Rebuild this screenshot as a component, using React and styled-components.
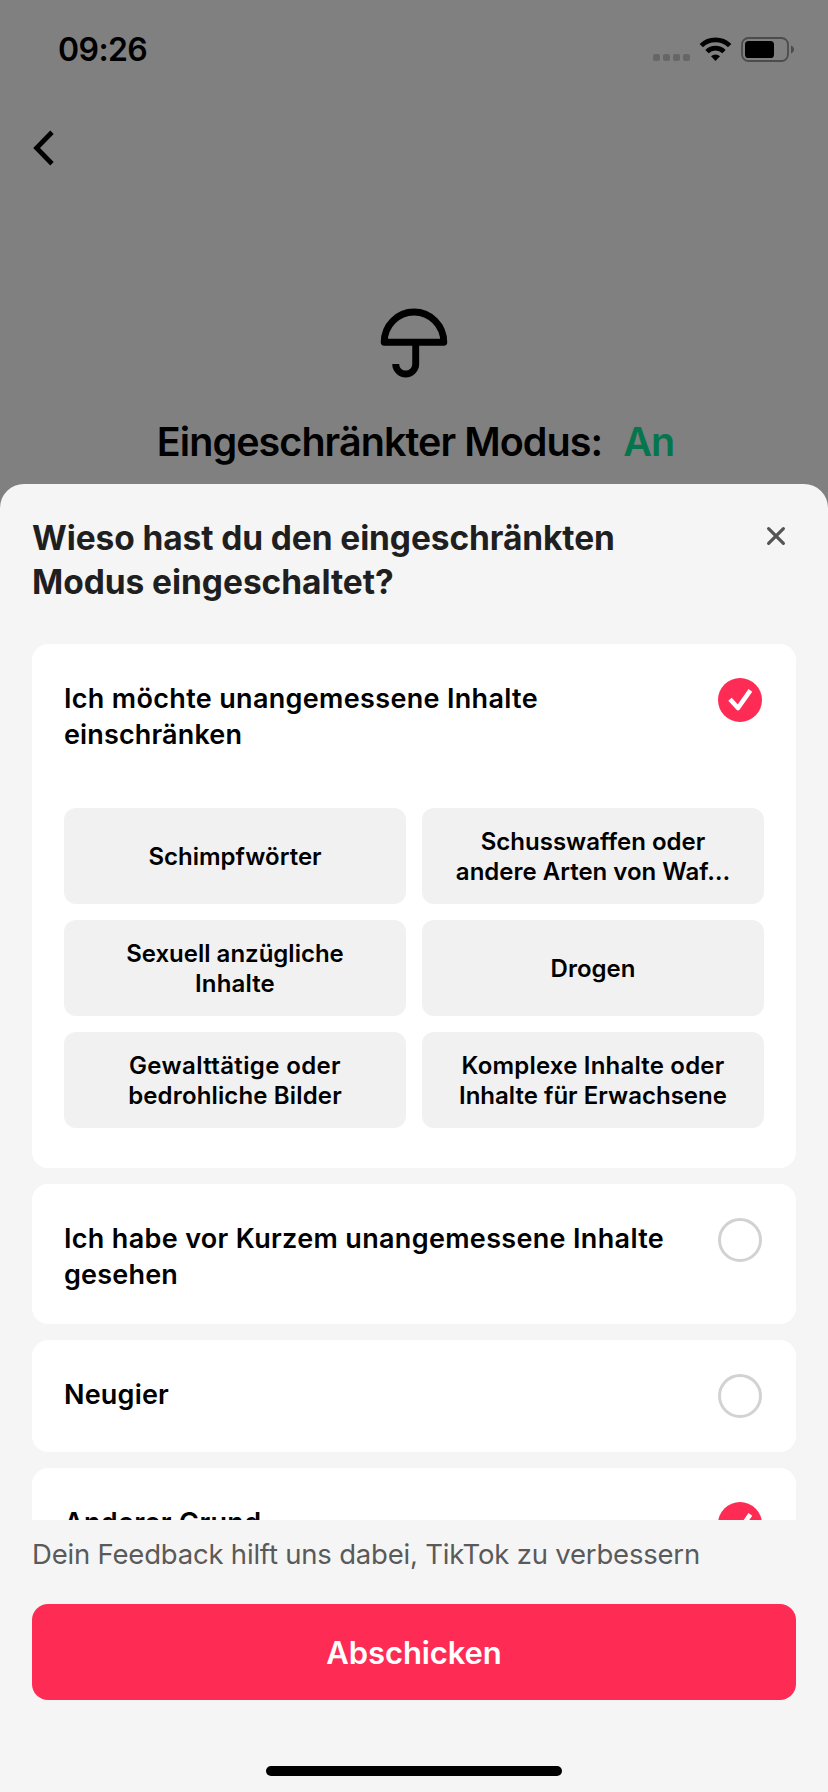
import React, { useState } from 'react';
import styled, { createGlobalStyle } from 'styled-components';

const reasons = [
  {
    id: 'restrict',
    lines: [
      { text: 'Ich möchte unangemessene Inhalte', track: 0.33 },
      { text: 'einschränken', track: 0.14 },
    ],
    topics: [
      [{ text: 'Schimpfwörter', track: 0 }],
      [{ text: 'Schusswaffen oder', track: 0 }, { text: 'andere Arten von Waf…', track: 0 }],
      [{ text: 'Sexuell anzügliche', track: 0 }, { text: 'Inhalte', track: 0.15 }],
      [{ text: 'Drogen', track: 0 }],
      [{ text: 'Gewalttätige oder', track: 0.37 }, { text: 'bedrohliche Bilder', track: 0.15 }],
      [{ text: 'Komplexe Inhalte oder', track: 0.2 }, { text: 'Inhalte für Erwachsene', track: 0.02 }],
    ],
  },
  {
    id: 'seen',
    lines: [
      { text: 'Ich habe vor Kurzem unangemessene Inhalte', track: 0.33 },
      { text: 'gesehen', track: 0.2 },
    ],
  },
  { id: 'curious', lines: [{ text: 'Neugier', track: 0.2 }] },
  { id: 'other', lines: [{ text: 'Anderer Grund', track: 0.3 }] },
];

const StatusIcons = () => (
  <svg width="144" height="28" viewBox="652 36 144 28" fill="none">
    <g fill="#666">
      <rect x="653" y="54" width="7" height="7" rx="2" />
      <rect x="663" y="54" width="7" height="7" rx="2" />
      <rect x="673" y="54" width="7" height="7" rx="2" />
      <rect x="683" y="54" width="7" height="7" rx="2" />
    </g>
    <g stroke="#000" strokeWidth="4.8">
      <path d="M701.3 45.6 A20.4 20.4 0 0 1 729.7 45.6" />
      <path d="M707 51.6 A12.2 12.2 0 0 1 724 51.6" />
    </g>
    <path d="M715.5 61 L711 56.3 A6.4 6.4 0 0 1 720 56.3 Z" fill="#000" />
    <rect x="742" y="38" width="46" height="23" rx="6.5" stroke="#4c4c4c" strokeWidth="1.8" />
    <rect x="745" y="41" width="29" height="17" rx="3.6" fill="#000" />
    <path d="M791 45.5 C795 47 795 52 791 53.5 Z" fill="#4c4c4c" />
  </svg>
);

const BackIcon = () => (
  <svg width="24" height="38" viewBox="32 129 24 38" fill="none">
    <path d="M52 132.3 L36.6 148 L52 163.7" stroke="#000" strokeWidth="4.8" />
  </svg>
);

const UmbrellaIcon = () => (
  <svg width="68" height="70" viewBox="380 308 68 70" fill="none" stroke="#000" strokeWidth="6.9">
    <path d="M384.2 342.3 A29.8 30.3 0 0 1 443.8 342.3 Z" strokeLinejoin="round" />
    <path d="M415.7 342 V364 A10 10 0 0 1 395.7 364" />
  </svg>
);

const CloseIcon = () => (
  <svg width="20" height="20" viewBox="0 0 20 20" fill="none">
    <path d="M2.6 2.6 L17.4 17.4 M17.4 2.6 L2.6 17.4" stroke="#545454" strokeWidth="3.2" strokeLinecap="round" />
  </svg>
);

const CheckIcon = () => (
  <svg width="44" height="44" viewBox="0 0 44 44" fill="none">
    <path d="M12 21.3 L20 30 L32.4 12.4" stroke="#fff" strokeWidth="4.6" strokeLinejoin="round" />
  </svg>
);

const App = () => {
  const [selected, setSelected] = useState(['restrict', 'other']);

  const toggle = (id) =>
    setSelected((prev) => (prev.includes(id) ? prev.filter((x) => x !== id) : [...prev, id]));

  return (
    <Screen>
      <GlobalStyle />
      <StatusBar>
        <Time>09:26</Time>
        <StatusIcons />
      </StatusBar>
      <NavBar>
        <BackIcon />
      </NavBar>
      <Hero>
        <UmbrellaIcon />
        <HeroTitle>
          <span>Eingeschränkter Modus:</span>
          <On>An</On>
        </HeroTitle>
      </Hero>
      <Sheet>
        <SheetHeader>
          <SheetTitle>
            <Line $track={-0.1}>Wieso hast du den eingeschränkten</Line>
            <Line $track={-0.05}>Modus eingeschaltet?</Line>
          </SheetTitle>
          <CloseButton aria-label="Schließen">
            <CloseIcon />
          </CloseButton>
        </SheetHeader>
        <ReasonList>
          {reasons.map(({ id, lines, topics }) => (
            <Card key={id}>
              <CardHead onClick={() => toggle(id)}>
                <Label>
                  {lines.map((l) => (
                    <Line key={l.text} $track={l.track}>{l.text}</Line>
                  ))}
                </Label>
                <Radio $checked={selected.includes(id)}>
                  {selected.includes(id) && <CheckIcon />}
                </Radio>
              </CardHead>
              {topics && (
                <TopicGrid>
                  {topics.map((topic) => (
                    <Topic key={topic[0].text}>
                      {topic.map((l) => (
                        <Line key={l.text} $track={l.track}>{l.text}</Line>
                      ))}
                    </Topic>
                  ))}
                </TopicGrid>
              )}
            </Card>
          ))}
        </ReasonList>
        <Footer>
          <Hint>Dein Feedback hilft uns dabei, TikTok zu verbessern</Hint>
          <SubmitButton>Abschicken</SubmitButton>
          <HomeIndicator />
        </Footer>
      </Sheet>
    </Screen>
  );
};

const GlobalStyle = createGlobalStyle`
* {
  box-sizing: border-box;
}
body {
  margin: 0;
  background: #808080;
}
button {
  font: inherit;
  border: 0;
  padding: 0;
}
svg {
  display: block;
  flex: none;
}
`;

const Screen = styled.div`
display: flex;
flex-direction: column;
width: 828px;
height: 1792px;
overflow: hidden;
background: #808080;
color: #000;
font-family: Inter, 'Liberation Sans', sans-serif;
`;

const StatusBar = styled.div`
display: flex;
justify-content: space-between;
align-items: flex-start;
height: 96px;
padding: 36px 32px 0 58px;
`;

const Time = styled.div`
font-size: 32px;
font-weight: 600;
line-height: 28px;
letter-spacing: -0.6px;
`;

const NavBar = styled.div`
height: 104px;
padding: 33px 32px 0;
`;

const Hero = styled.div`
display: flex;
flex-direction: column;
align-items: center;
height: 284px;
padding-top: 108px;
`;

const HeroTitle = styled.h1`
display: flex;
gap: 21px;
margin: 40px 0 0;
padding-left: 3px;
font-size: 39.5px;
font-weight: 600;
line-height: 48px;
letter-spacing: -0.95px;
white-space: nowrap;
`;

const On = styled.span`
color: #05754d;
`;

const Sheet = styled.section`
display: flex;
flex-direction: column;
flex: 1;
min-height: 0;
border-radius: 24px 24px 0 0;
background: #f5f5f5;
`;

const SheetHeader = styled.header`
display: flex;
justify-content: space-between;
align-items: flex-start;
height: 160px;
padding: 32px 42px 0 32px;
`;

const SheetTitle = styled.h2`
margin: 0;
color: #1f1f1f;
font-size: 33.5px;
font-weight: 700;
line-height: 44px;
`;

const CloseButton = styled.button`
margin-top: 10px;
background: transparent;
`;

const Line = styled.span`
display: block;
letter-spacing: ${({ $track }) => $track}px;
white-space: nowrap;
`;

const ReasonList = styled.div`
display: flex;
flex-direction: column;
gap: 16px;
height: 876px;
padding: 0 32px;
overflow: hidden;
`;

const Card = styled.article`
flex: none;
padding: 34px 32px 40px;
border-radius: 16px;
background: #fff;
`;

const CardHead = styled.div`
display: flex;
justify-content: space-between;
align-items: flex-start;
padding-right: 2px;
`;

const Label = styled.div`
margin: 3px 0 -9px;
font-size: 27px;
font-weight: 600;
line-height: 36px;
`;

const Radio = styled.span`
flex: none;
width: 44px;
height: 44px;
margin-bottom: -6px;
border-radius: 50%;
border: ${({ $checked }) => ($checked ? '0' : '3px solid #d2d2d2')};
background: ${({ $checked }) => ($checked ? '#fe2c55' : 'transparent')};
`;

const TopicGrid = styled.div`
display: grid;
grid-template-columns: 1fr 1fr;
grid-auto-rows: 96px;
gap: 16px;
margin-top: 64px;
`;

const Topic = styled.div`
display: flex;
flex-direction: column;
justify-content: center;
align-items: center;
padding-top: 2px;
border-radius: 12px;
background: #f1f1f1;
font-size: 24px;
font-weight: 600;
line-height: 30px;
`;

const Footer = styled.footer`
display: flex;
flex-direction: column;
align-items: center;
flex: 1;
padding: 14px 32px 0;
`;

const Hint = styled.p`
align-self: flex-start;
margin: 0;
color: #5a5a5a;
font-size: 27.5px;
line-height: 40px;
letter-spacing: -0.2px;
white-space: nowrap;
`;

const SubmitButton = styled.button`
width: 100%;
height: 96px;
margin-top: 30px;
border-radius: 16px;
background: #fe2c55;
color: #fff;
font-size: 31px;
font-weight: 600;
letter-spacing: -0.1px;
`;

const HomeIndicator = styled.div`
width: 296px;
height: 10px;
margin-top: 66px;
border-radius: 5px;
background: #000;
`;

export default App;
